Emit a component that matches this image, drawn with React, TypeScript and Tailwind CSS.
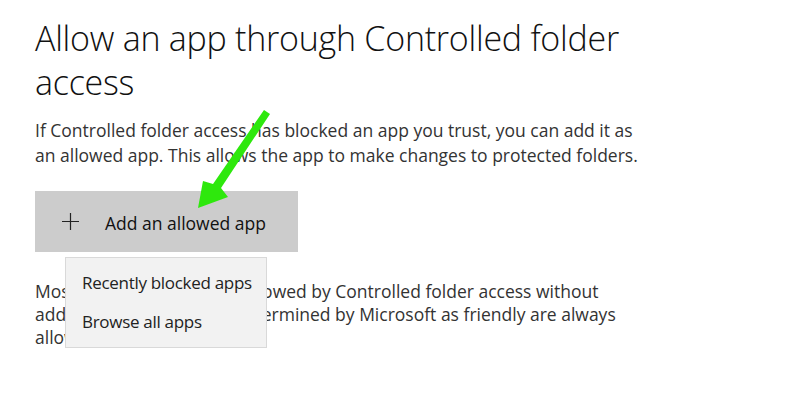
import React from "react";

// Windows Security style page — "Allow an app" with open dropdown
function GreenArrow() {
  return (
    <svg className="pointer-events-none absolute left-0 top-0" width="800" height="402" viewBox="0 0 800 402">
      <defs>
        <filter id="soft" x="-20%" y="-20%" width="140%" height="140%">
          <feGaussianBlur stdDeviation="0.7" />
        </filter>
      </defs>
      <polygon
        points="264,110 270,114 221,188 228,197 198,208 203,181 213,184"
        fill="#2ee80f"
        filter="url(#soft)"
      />
    </svg>
  );
}

export default function App() {
  return (
    <div className="relative h-[402px] w-[800px] overflow-hidden bg-white font-['Open_Sans',sans-serif] text-black">
      <div className="px-[35px] pt-[16px]">
        <h1 className="w-[640px] text-[34px] font-light leading-[44px] tracking-[-0.25px] text-[#111]">
          Allow an app through Controlled folder access
        </h1>

        <p className="mt-[14px] w-[640px] text-[17.5px] leading-[24.5px] text-[#333]">
          If Controlled folder access has blocked an app you trust, you can add it as
          <br />
          an allowed app. This allows the app to make changes to protected folders.
        </p>

        <div className="relative mt-[24px]">
          <button className="flex h-[61px] w-[263px] items-center bg-[#cccccc] pl-[26px] pt-[3px] text-[17.5px] text-[#111]">
            <svg width="19" height="19" viewBox="0 0 19 19" className="mr-[25px] -mt-[3px]">
              <path d="M9.5 1v17M1 9.5h17" stroke="#222" strokeWidth="1.2" fill="none" />
            </svg>
            Add an allowed app
          </button>

          <p className="mt-[28px] w-[660px] text-[17.5px] leading-[23px] text-[#333]">
            Most of your apps will be allowed by Controlled folder access without
            <br />
            adding them here. Apps determined by Microsoft as friendly are always
            <br />
            allowed.
          </p>

          <div className="absolute left-[30px] top-[66px] flex h-[91px] w-[202px] flex-col border border-[#d9d9d9] bg-[#f2f2f2] pt-[5px] text-[17px] tracking-[-0.3px] text-[#222]">
            <div className="flex h-[39px] items-center whitespace-nowrap px-[16px]">Recently blocked apps</div>
            <div className="flex h-[39px] items-center whitespace-nowrap px-[16px]">Browse all apps</div>
          </div>
        </div>
      </div>
      <GreenArrow />
    </div>
  );
}
